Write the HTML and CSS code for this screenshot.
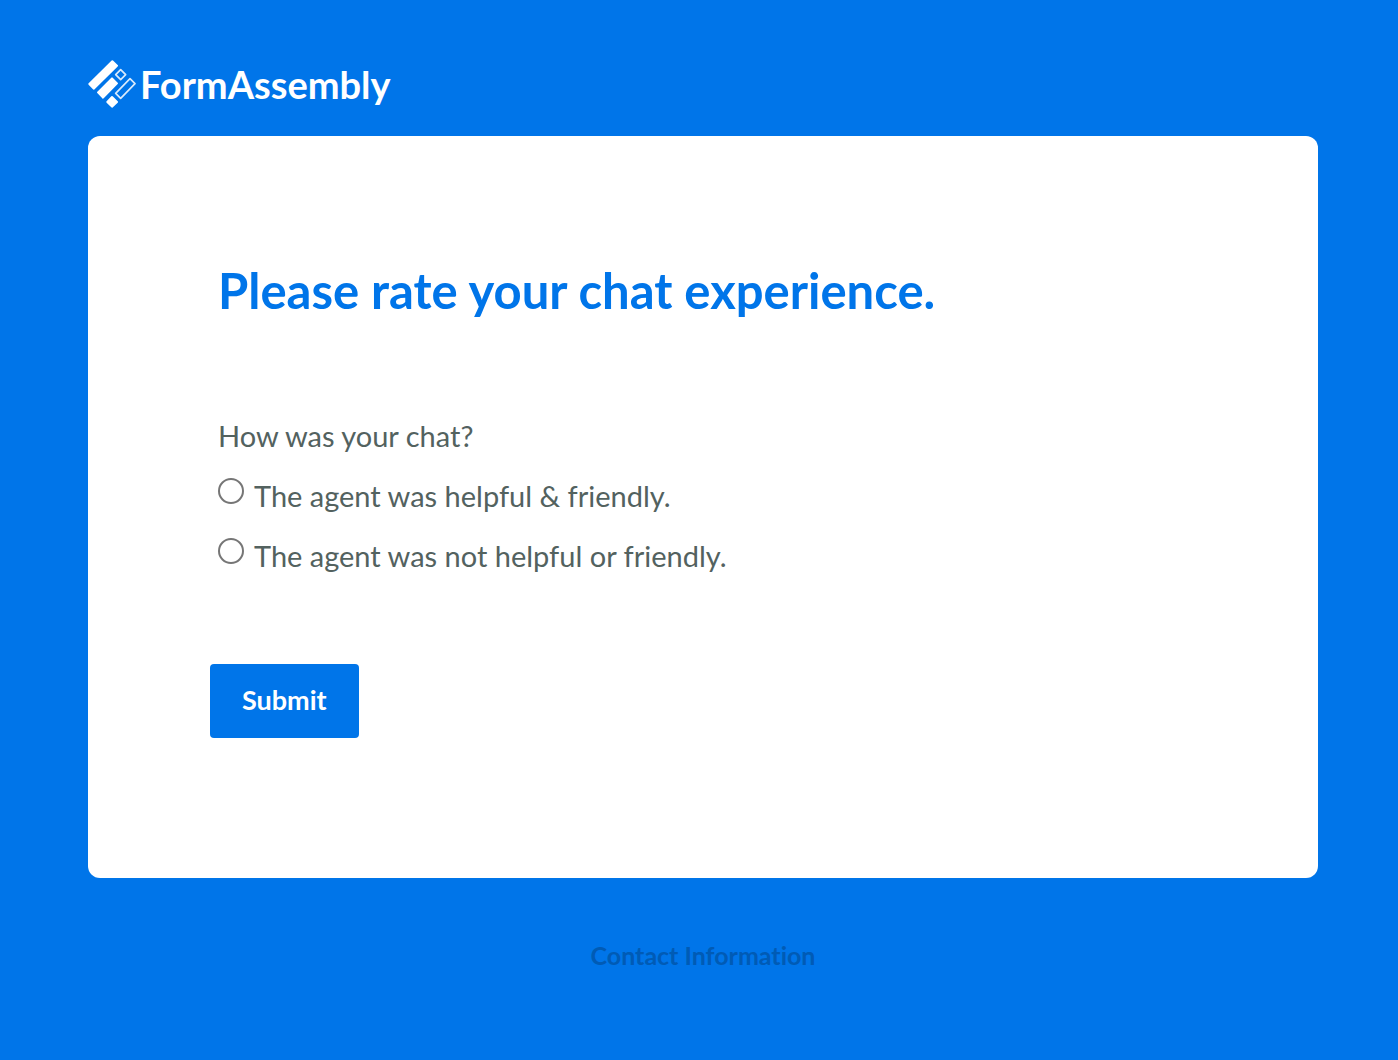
FILE: index.html
```html
<!DOCTYPE html>
<html lang="en">
  <head>
    <meta charset="UTF-8" />
    <meta name="viewport" content="width=device-width, initial-scale=1.0" />
    <title>Chat Survey</title>
    <link rel="stylesheet" href="styles.css">
  </head>
  <body>
    <header class="logo">
      <svg class="logo-mark" viewBox="0 0 144 144" aria-hidden="true">
        <g fill="#ffffff" stroke="#ffffff" stroke-width="6" stroke-linejoin="round">
          <path d="M73 4 L87 17 L17 86 L4 72 Z" />
          <path d="M72 55 L87 70 L45 113 L30 97 Z" />
          <path d="M72 111 L87 126 L72 140 L58 126 Z" />
        </g>
        <g fill="none" stroke="#ffffff" stroke-opacity="0.85" stroke-width="5" stroke-linejoin="round">
          <path d="M98 29 L113 44 L98 59 L83 44 Z" />
          <path d="M126 56 L141 71 L98 115 L83 100 Z" />
        </g>
      </svg>
      <span class="logo-text">FormAssembly</span>
    </header>

    <main class="card">
      <h1>Please rate your chat experience.</h1>
      <form id="surveyForm">
        <fieldset>
          <legend>How was your chat?</legend>
          <div class="option">
            <input type="radio" id="helpful" name="rating" value="helpful" />
            <label for="helpful">The agent was helpful &amp; friendly.</label>
          </div>
          <div class="option">
            <input type="radio" id="notHelpful" name="rating" value="not-helpful" />
            <label for="notHelpful">The agent was not helpful or friendly.</label>
          </div>
        </fieldset>
        <button type="submit">Submit</button>
      </form>
    </main>

    <footer>
      <a href="#">Contact Information</a>
    </footer>
  </body>
</html>
```

FILE: styles.css
```css
* {
  box-sizing: border-box;
}

body {
  margin: 0;
  padding: 60px 80px 60px 88px;
  background-color: #0075e9;
  color: #53625f;
  font-family: "Avenir Next", Lato, sans-serif;
  font-size: 29px;
  font-variant-ligatures: none;
  line-height: 40px;
}

.logo {
  display: flex;
  align-items: center;
  gap: 4px;
  height: 48px;
  margin-bottom: 28px;
}

.logo-mark {
  width: 48px;
  height: 48px;
}

.logo-text {
  color: #ffffff;
  font-size: 38px;
  font-weight: bold;
}

.card {
  padding: 124px 130px 140px;
  border-radius: 12px;
  background-color: #ffffff;
}

h1 {
  margin: 0 0 96px;
  color: #0075e9;
  font-size: 49px;
  line-height: 60px;
}

fieldset {
  margin: 0 0 88px;
  padding: 0;
  border: none;
}

legend {
  padding: 0;
  margin-bottom: 20px;
}

.option {
  display: flex;
  align-items: flex-start;
  gap: 10px;
}

.option + .option {
  margin-top: 20px;
}

.option input {
  appearance: none;
  flex: none;
  width: 26px;
  height: 26px;
  margin: 2px 0 0;
  border: 2px solid #767676;
  border-radius: 50%;
  background-color: #ffffff;
}

.option input:checked {
  background-color: #0075e9;
  box-shadow: inset 0 0 0 4px #ffffff;
}

button {
  display: block;
  margin-left: -8px;
  padding: 16px 32px 18px;
  border: none;
  border-radius: 4px;
  background-color: #0075e9;
  color: #ffffff;
  font-family: inherit;
  font-size: 27px;
  font-weight: bold;
  line-height: 40px;
  cursor: pointer;
}

footer {
  margin-top: 56px;
  text-align: center;
}

footer a {
  color: #005bb5;
  font-size: 25px;
  font-weight: bold;
  text-decoration: none;
}
```
